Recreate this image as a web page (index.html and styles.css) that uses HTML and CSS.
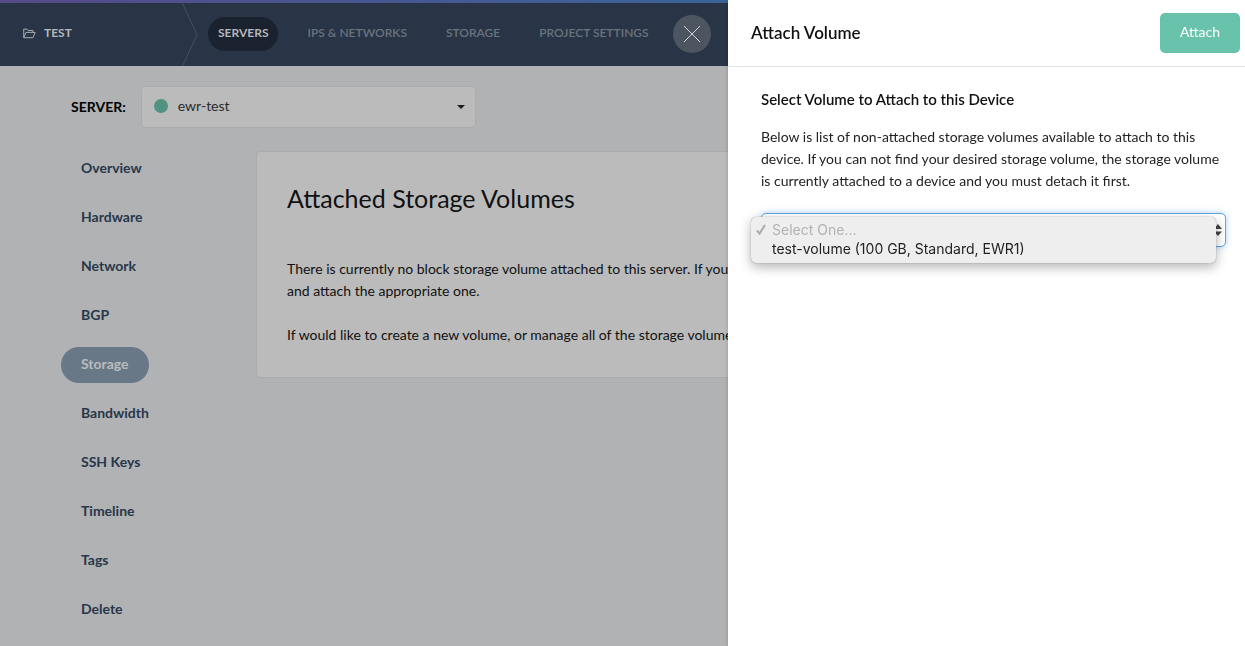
FILE: index.html
```html
<!DOCTYPE html>
<html lang="en">
<head>
<meta charset="utf-8">
<title>Attach Volume</title>
<link rel="stylesheet" href="styles.css">
</head>
<body>
<div class="page">
  <header class="topbar">
    <a class="project" href="#">
      <svg class="folder" viewBox="0 0 14 12" aria-hidden="true"><path d="M.7 10.6V1.2h3.6l1.2 1.5h5.1v2M.7 10.4l2.5-5.6h10L10.800 10.600H.9"/></svg>
      <span>TEST</span>
    </a>
    <svg class="chevron" viewBox="0 0 16 63" aria-hidden="true"><path d="M.5 0 15 32 .5 63"/></svg>
    <nav class="tabs">
      <a class="tab active" href="#">SERVERS</a>
      <a class="tab" href="#">IPS &amp; NETWORKS</a>
      <a class="tab" href="#">STORAGE</a>
      <a class="tab" href="#">PROJECT SETTINGS</a>
    </nav>
  </header>
  <div class="server-row">
    <label for="server">SERVER:</label>
    <div class="server-picker">
      <select id="server"><option>ewr-test</option></select>
      <span class="status"></span>
      <span class="caret"></span>
    </div>
  </div>
  <div class="content">
    <nav class="side">
      <a href="#">Overview</a>
      <a href="#">Hardware</a>
      <a href="#">Network</a>
      <a href="#">BGP</a>
      <a class="current" href="#">Storage</a>
      <a href="#">Bandwidth</a>
      <a href="#">SSH Keys</a>
      <a href="#">Timeline</a>
      <a href="#">Tags</a>
      <a href="#">Delete</a>
    </nav>
    <main class="card">
      <h1>Attached Storage Volumes</h1>
      <p>There is currently no block storage volume attached to this server. If you<br>and attach the appropriate one.</p>
      <p>If would like to create a new volume, or manage all of the storage volumes</p>
    </main>
  </div>
</div>

<aside class="drawer">
  <button class="close" type="button" aria-label="Close"><svg viewBox="0 0 16 16" aria-hidden="true"><path d="M0 0 16 16M16 0 0 16"/></svg></button>
  <div class="drawer-head">
    <h2>Attach Volume</h2>
    <button class="attach" type="button">Attach</button>
  </div>
  <div class="drawer-body">
    <h3><label for="volume">Select Volume to Attach to this Device</label></h3>
    <p>Below is list of non-attached storage volumes available to attach to this device. If you can not find your desired storage volume, the storage volume is currently attached to a device and you must detach it first.</p>
    <div class="volume-picker">
      <select id="volume"><option value=""></option></select>
      <svg class="arrows" viewBox="0 0 8 12" aria-hidden="true"><path d="M0 5 4 0l4 5zM0 7.500h8L4 12z"/></svg>
      <ul class="menu" role="listbox" aria-label="Volumes">
        <li class="disabled" role="option" aria-selected="true"><svg viewBox="0 0 10 11" aria-hidden="true"><path d="M1 6.500 3.600 9.600 9 1"/></svg>Select One...</li>
        <li role="option" aria-selected="false">test-volume (100 GB, Standard, EWR1)</li>
      </ul>
    </div>
  </div>
</aside>
</body>
</html>
```
FILE: styles.css
```css
* { box-sizing: border-box; }

body {
  margin: 0;
  min-height: 100vh;
  overflow: hidden;
  background: #b0b2b4;
  color: #101112;
  font: 14px/22px Lato, "Open Sans", sans-serif;
}

h1, h2, h3, p, ul { margin: 0; padding: 0; }
a { color: inherit; text-decoration: none; }
select, button { font: inherit; color: inherit; }

.topbar {
  display: flex;
  height: 66px;
  background: linear-gradient(90deg, #56498a, #3a6496 58%, #2c7a9c) top / 100% 3px no-repeat #293546;
  padding-top: 3px;
  font-size: 12px;
  font-weight: 700;
}
.project {
  display: flex;
  align-items: center;
  gap: 8px;
  width: 182px;
  padding: 0 0 3px 23px;
  color: #b5b7b9;
}
.folder { width: 13px; height: 11px; fill: none; stroke: #b5b7b9; }
.chevron { width: 16px; height: 63px; fill: none; stroke: #46515c; }
.tabs {
  display: flex;
  align-items: center;
  gap: 19px;
  padding: 0 0 1px 10px;
}
.tab { padding: 5px 10px 7px; color: #69737f; font-weight: 600; white-space: nowrap; }
.tab.active { border-radius: 17px; background: #1a2230; color: #b5b7b9; font-weight: 700; }

.server-row {
  display: flex;
  align-items: center;
  gap: 15px;
  padding: 20px 0 23px 71px;
}
.server-row label { font-weight: 700; color: #000; }
.server-picker { position: relative; width: 335px; }
.server-picker select {
  display: block;
  width: 100%;
  height: 42px;
  padding: 0 36px 2px;
  border: 1px solid #a9abac;
  border-radius: 4px;
  background: #bbb;
  color: #2a2b2c;
  appearance: none;
}
.status {
  position: absolute;
  left: 13px;
  top: 13px;
  width: 14px;
  height: 14px;
  border-radius: 50%;
  background: #4f9380;
}
.caret {
  position: absolute;
  right: 11px;
  top: 19px;
  border: 4px solid transparent;
  border-top-color: #1c1d1e;
  border-bottom: 0;
}

.content {
  display: flex;
  align-items: flex-start;
  padding: 0 61px;
}
.side {
  display: flex;
  flex-direction: column;
  align-items: flex-start;
  gap: 13px;
  flex: 0 0 195px;
  color: #28374a;
  font-weight: 700;
}
.side a { padding: 6px 20px 8px; border-radius: 18px; }
.side .current { background: #697887; color: #b9bbbc; }

.card {
  flex: 1;
  padding: 31px 30px;
  border: 1px solid #a9abac;
  border-radius: 4px;
  background: #bbb;
}
.card h1 { margin-bottom: 45px; font-size: 25px; line-height: 30px; font-weight: 400; }
.card p { white-space: nowrap; }
.card p + p { margin-top: 22px; }

.drawer {
  position: fixed;
  top: 0;
  right: 0;
  bottom: 0;
  width: 517px;
  background: #fff;
  box-shadow: 0 0 4px rgba(0, 0, 0, .2);
}
.close {
  position: absolute;
  left: -55px;
  top: 15px;
  display: grid;
  place-items: center;
  width: 38px;
  height: 38px;
  padding: 0;
  border: 0;
  border-radius: 50%;
  background: #4d5660;
}
.close svg { width: 16px; height: 16px; stroke: #d0d2d4; }
.drawer-head {
  display: flex;
  align-items: center;
  justify-content: space-between;
  height: 67px;
  padding: 0 5px 0 23px;
  border-bottom: 1px solid #e2e2e2;
}
.drawer-head h2 { font-size: 17px; font-weight: 600; }
.attach {
  height: 40px;
  padding: 0 20px 2px;
  border: 0;
  border-radius: 5px;
  background: #69c2ab;
  color: #fff;
}
.drawer-body { padding: 21px 19px 0 33px; }
.drawer-body h3 { margin-bottom: 16px; font-size: 15px; font-weight: 600; }
.drawer-body p { margin-bottom: 21px; color: #222; }

.volume-picker { position: relative; }
.volume-picker select {
  display: block;
  width: 100%;
  height: 34px;
  border: 1px solid #5ea6e6;
  border-radius: 5px;
  background: #fff;
  box-shadow: 0 0 6px rgba(94, 166, 230, .5);
  appearance: none;
  outline: none;
}
.arrows { position: absolute; right: 4px; top: 11px; width: 8px; height: 12px; fill: #444; }
.menu {
  position: absolute;
  left: -10px;
  right: 10px;
  top: 4px;
  padding: 3px 0 5px;
  border-radius: 5px;
  background: #eee;
  box-shadow: 0 0 1px rgba(0, 0, 0, .5), 0 4px 12px rgba(0, 0, 0, .3);
  list-style: none;
  font: 14px/19px Inter, Roboto, sans-serif;
}
.menu li { position: relative; padding-left: 21px; color: #222; }
.menu .disabled { color: #b2b2b2; }
.menu svg {
  position: absolute;
  left: 5px;
  top: 4px;
  width: 10px;
  height: 11px;
  fill: none;
  stroke: #aaa;
  stroke-width: 2;
}
```
